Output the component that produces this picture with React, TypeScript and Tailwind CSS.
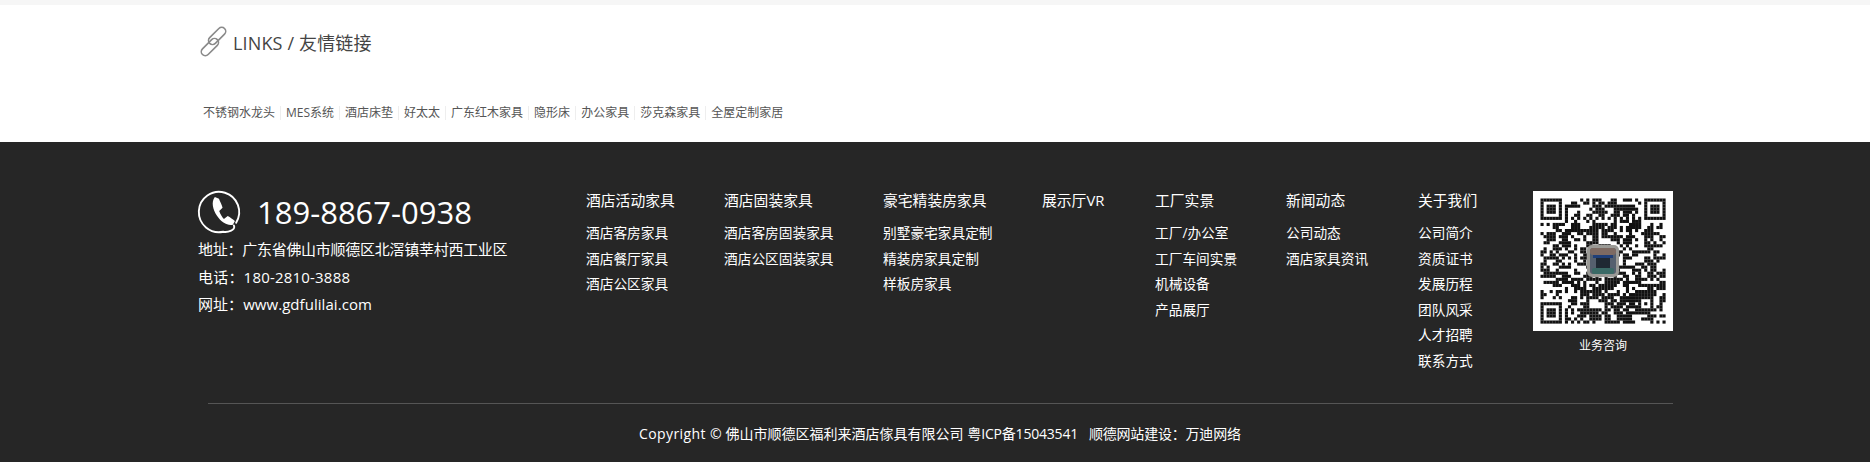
import React from "react";

const links = ["不锈钢水龙头", "MES系统", "酒店床垫", "好太太", "广东红木家具", "隐形床", "办公家具", "莎克森家具", "全屋定制家居"];

const columns = [
  { w: "w-[138px]", title: "酒店活动家具", items: ["酒店客房家具", "酒店餐厅家具", "酒店公区家具"] },
  { w: "w-[159px]", title: "酒店固装家具", items: ["酒店客房固装家具", "酒店公区固装家具"] },
  { w: "w-[159px]", title: "豪宅精装房家具", items: ["别墅豪宅家具定制", "精装房家具定制", "样板房家具"] },
  { w: "w-[113px]", title: "展示厅VR", items: [] },
  { w: "w-[131px]", title: "工厂实景", items: ["工厂/办公室", "工厂车间实景", "机械设备", "产品展厅"] },
  { w: "w-[132px]", title: "新闻动态", items: ["公司动态", "酒店家具资讯"] },
  { w: "w-[115px]", title: "关于我们", items: ["公司简介", "资质证书", "发展历程", "团队风采", "人才招聘", "联系方式"] },
];

function LinkIcon() {
  return (
    <svg width="40" height="40" viewBox="0 0 40 40" fill="none" stroke="#8a8a8a" strokeWidth="1.6">
      <rect x="3.4" y="20.1" width="21" height="8" rx="4" transform="rotate(-45 13.9 24.1)" />
      <rect x="10.6" y="8.9" width="21" height="8" rx="4" transform="rotate(-45 21.1 12.9)" />
    </svg>
  );
}

function PhoneIcon() {
  return (
    <svg width="56" height="56" viewBox="0 0 50 50" fill="none" className="shrink-0">
      <path d="M38.5 34.5A18 18 0 1 0 27 42.6C31 43.4 38.6 41 36.5 37" stroke="#fff" strokeWidth="1.7" strokeLinecap="round" />
      <path
        d="M19.5 11.5L23.2 13.2C24 15.5 26 19 26.4 21.2L23.4 24C24.5 27 26 29.4 27.6 31.2L31 28.6C33 29.8 36 31.6 37.4 33L35.6 36.4C31 37.6 25.4 34.4 21.4 28.4C17.8 22.8 16 16 19.5 11.5Z"
        fill="#fff"
      />
    </svg>
  );
}

function buildQr() {
  const n = 41;
  let seed = 20150435;
  const next = () => {
    seed = (seed * 1664525 + 1013904223) >>> 0;
    return seed / 4294967296;
  };
  const m: boolean[][] = [];
  for (let y = 0; y < n; y++) {
    m.push([]);
    for (let x = 0; x < n; x++) {
      const prevX = x > 0 ? m[y][x - 1] : false;
      const prevY = y > 0 ? m[y - 1][x] : false;
      const bias = 0.48 + (prevX ? 0.1 : -0.04) + (prevY ? 0.08 : -0.03);
      m[y].push(next() < bias);
    }
  }
  const finder = (ox: number, oy: number) => {
    for (let y = -1; y <= 7; y++)
      for (let x = -1; x <= 7; x++) {
        const px = ox + x;
        const py = oy + y;
        if (px < 0 || py < 0 || px >= n || py >= n) continue;
        const inside = x >= 0 && x <= 6 && y >= 0 && y <= 6;
        const ring = x === 0 || x === 6 || y === 0 || y === 6;
        const core = x >= 2 && x <= 4 && y >= 2 && y <= 4;
        m[py][px] = inside && (ring || core);
      }
  };
  finder(0, 0);
  finder(n - 7, 0);
  finder(0, n - 7);
  for (let i = 8; i < n - 8; i++) {
    m[6][i] = i % 2 === 0;
    m[i][6] = i % 2 === 0;
  }
  for (let y = -2; y <= 2; y++)
    for (let x = -2; x <= 2; x++) {
      m[34 + y][34 + x] = Math.max(Math.abs(x), Math.abs(y)) !== 1;
    }
  return m;
}

function QrCode() {
  const m = buildQr();
  const rects: React.ReactNode[] = [];
  m.forEach((row, y) =>
    row.forEach((on, x) => {
      if (on) rects.push(<rect key={`${x}-${y}`} x={x} y={y} width="1.02" height="1.02" />);
    })
  );
  return (
    <svg width="140" height="140" viewBox="0 0 140 140" className="block bg-white">
      <g transform="translate(7.5 7.5) scale(3.05)" fill="#111">
        {rects}
      </g>
      <rect x="54" y="54" width="32" height="32" rx="5" fill="#9a9a96" />
      <rect x="57" y="57" width="26" height="26" rx="3" fill="#55606e" />
      <rect x="57" y="57" width="26" height="7" rx="3" fill="#7d6a62" />
      <rect x="60" y="64" width="20" height="3" fill="#1f3f78" />
      <rect x="63" y="67" width="14" height="13" fill="#1f2933" />
      <rect x="59" y="77" width="22" height="6" rx="2" fill="#3a6a66" />
    </svg>
  );
}

export default function App() {
  return (
    <div className="w-[1870px] h-[462px] overflow-hidden bg-white font-['Open_Sans','Noto_Sans_CJK_SC',sans-serif]">
      <div className="h-[5px] bg-[#f6f6f6]" />
      <section className="h-[137px] pl-[200px] pt-[18px]">
        <div className="flex items-center h-[40px] text-[18px] text-[#444] tracking-[0.15px]">
          <span className="-ml-[4px] w-[37px] shrink-0"><LinkIcon /></span>
          <span>LINKS / 友情链接</span>
        </div>
        <ul className="flex mt-[43px] ml-[-2px] text-[12px] leading-[14px] text-[#555]">
          {links.map((l, i) => (
            <li key={l} className={i < links.length - 1 ? "px-[5px] border-r border-[#eeeeee]" : "px-[5px]"}>{l}</li>
          ))}
        </ul>
      </section>
      <footer className="h-[320px] bg-[#262626] text-white">
        <div className="flex h-[261px] pl-[198px] pt-[49px]">
          <div className="w-[388px] shrink-0">
            <div className="flex items-center h-[42px] -ml-[5px]">
              <PhoneIcon />
              <span className="ml-[8px] text-[31px] leading-[42px]">189-8867-0938</span>
            </div>
            <div className="mt-[3px] text-[15px] leading-[27.5px]">
              <p className="tracking-[-0.27px]">地址：广东省佛山市顺德区北滘镇莘村西工业区</p>
              <p className="tracking-[0.2px]">电话：180-2810-3888</p>
              <p className="tracking-[0.05px]">网址：www.gdfulilai.com</p>
            </div>
          </div>
          {columns.map((c) => (
            <div key={c.title} className={`${c.w} shrink-0 -mt-px`}>
              <h3 className="text-[14.8px] leading-[20px] font-normal">{c.title}</h3>
              <ul className="mt-[10px] text-[13.7px] leading-[25.5px]">
                {c.items.map((it) => <li key={it}>{it}</li>)}
              </ul>
            </div>
          ))}
          <div className="w-[140px] shrink-0">
            <QrCode />
            <p className="mt-[7px] text-center text-[12px] leading-[16px]">业务咨询</p>
          </div>
        </div>
        <div className="ml-[208px] w-[1465px] h-px bg-[#555]" />
        <p className="mt-[20px] pl-[639px] text-[14px] leading-[20px]">
          <span className="tracking-[0.4px]">Copyright ©</span> 佛山市顺德区福利来酒店傢具有限公司 粤<span className="tracking-[-0.2px]">ICP备15043541</span>&nbsp;&nbsp; <span className="tracking-[-0.2px]">顺德网站建设：万迪网络</span>
        </p>
      </footer>
    </div>
  );
}
